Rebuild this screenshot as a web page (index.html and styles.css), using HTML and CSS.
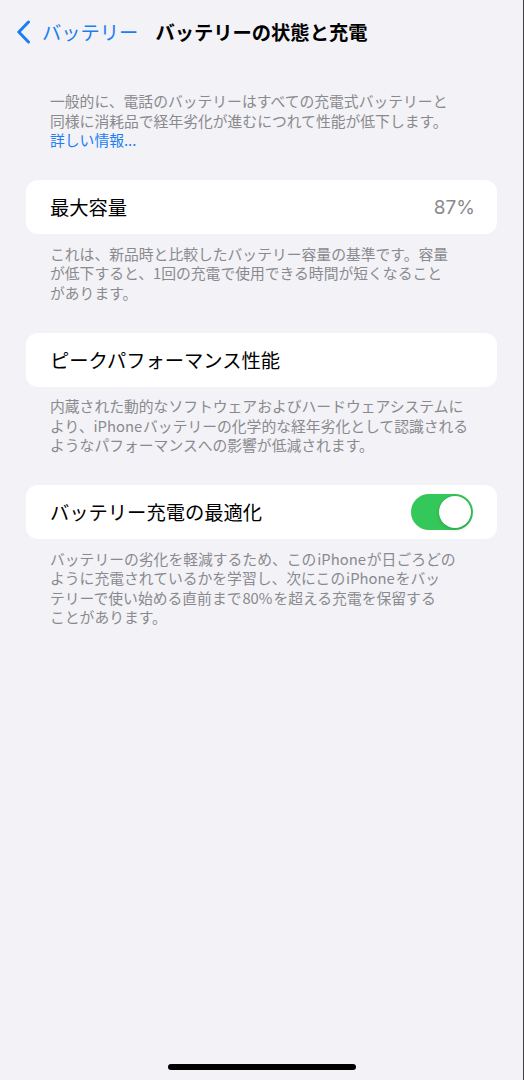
FILE: index.html
```html
<!DOCTYPE html>
<html lang="ja">
<head>
<meta charset="utf-8">
<title>バッテリーの状態と充電</title>
<link rel="stylesheet" href="styles.css">
</head>
<body>
<div class="screen">
  <header class="nav">
    <svg class="chevron" width="15" height="24" viewBox="0 0 15 24"><path d="M12.5 2 L2.8 12 L12.5 22" fill="none" stroke="currentColor" stroke-width="3" stroke-linecap="round" stroke-linejoin="round"/></svg>
    <span class="back">バッテリー</span>
    <h1 class="title">バッテリーの状態と充電</h1>
  </header>
  <main class="content">
    <p class="note intro">一般的に、電話のバッテリーはすべての充電式バッテリーと<br>同様に消耗品で経年劣化が進むにつれて性能が低下します。<br><span class="link">詳しい情報...</span></p>

    <div class="card">
      <span class="label">最大容量</span>
      <span class="value">87%</span>
    </div>
    <p class="note">これは、新品時と比較したバッテリー容量の基準です。容量<br>が低下すると、1回の充電で使用できる時間が短くなること<br>があります。</p>

    <div class="card">
      <span class="label">ピークパフォーマンス性能</span>
    </div>
    <p class="note">内蔵された動的なソフトウェアおよびハードウェアシステムに<br>より、iPhone&#8202;バッテリーの化学的な経年劣化として認識される<br>ようなパフォーマンスへの影響が低減されます。</p>

    <div class="card">
      <span class="label">バッテリー充電の最適化</span>
      <span class="toggle on"><span class="knob"></span></span>
    </div>
    <p class="note">バッテリーの劣化を軽減するため、この&#8202;iPhone&#8202;が日ごろどの<br>ように充電されているかを学習し、次にこの&#8202;iPhone&#8202;をバッ<br>テリーで使い始める直前まで&#8202;80%&#8202;を超える充電を保留する<br>ことがあります。</p>
  </main>
  <div class="home-indicator"></div>
</div>
</body>
</html>
```
FILE: styles.css
```css
* { box-sizing: border-box; }
html, body { margin: 0; padding: 0; }
body {
  background: #f2f2f7;
  font-family: "Noto Sans CJK JP", "Inter", sans-serif;
  color: #000;
}
.screen {
  width: 524px;
  min-height: 1080px;
  border-right: 1px solid #3e3e42;
  display: flex;
  flex-direction: column;
}
.nav {
  height: 64px;
  display: flex;
  align-items: center;
  padding-left: 16px;
}
.chevron { color: #1c7ef2; display: block; }
.back {
  color: #1c7ef2;
  font-size: 19.3px;
  margin-left: 11px;
  line-height: 24px;
}
.title {
  margin: 0 0 0 17px;
  font-size: 19.3px;
  font-weight: 700;
  line-height: 24px;
}
.content {
  padding: 0 26px 0 26px;
  display: flex;
  flex-direction: column;
}
.note {
  margin: 0 0 30.5px 0;
  padding: 9.5px 24px 0 24px;
  font-size: 14.8px;
  line-height: 19.5px;
  color: #8a8a8e;
  white-space: nowrap;
}
.intro {
  padding-top: 27px;
}
.link { color: #1c7ef2; }
.card {
  height: 54px;
  background: #fff;
  border-radius: 12px;
  display: flex;
  align-items: center;
  justify-content: space-between;
  padding: 0 24px 0 24px;
}
.label {
  font-size: 19.3px;
  line-height: 24px;
}
.value {
  font-family: "Inter", sans-serif;
  font-size: 19px;
  color: #8a8a8e;
  margin-right: -2px;
}
.toggle {
  width: 62px;
  height: 36px;
  border-radius: 18px;
  background: #34c759;
  display: flex;
  align-items: center;
  justify-content: flex-end;
  padding: 2px;
}
.knob {
  width: 32px;
  height: 32px;
  border-radius: 50%;
  background: #fff;
  box-shadow: 0 0 0 0.5px rgba(0,0,0,0.08), 0 2px 4px rgba(0,0,0,0.12);
}
.home-indicator {
  margin: auto auto 10px auto;
  width: 188px;
  height: 6px;
  border-radius: 3px;
  background: #000;
}
```
